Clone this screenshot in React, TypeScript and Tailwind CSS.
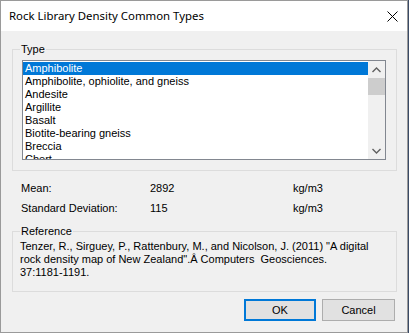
import React from "react"

const rocks = [
  "Amphibolite",
  "Amphibolite, ophiolite, and gneiss",
  "Andesite",
  "Argillite",
  "Basalt",
  "Biotite-bearing gneiss",
  "Breccia",
  "Chert",
]

const font = { fontFamily: '"Liberation Sans", Arial, sans-serif' }

const Chevron = ({ up }: { up?: boolean }) => (
  <svg width="9" height="6" viewBox="0 0 9 6" className="block">
    <path
      d={up ? "M0.5 5 L4.5 1 L8.5 5" : "M0.5 1 L4.5 5 L8.5 1"}
      fill="none"
      stroke="#606060"
      strokeWidth="1.4"
    />
  </svg>
)

const App = () => {
  return (
    <div className="w-[409px] h-[333px] bg-[#3a4a66] flex text-black" style={font}>
      <div className="w-[408px] h-[333px] border border-[#9a9a9a] bg-[#f0f0f0] flex flex-col">
        {/* title bar */}
        <div className="h-[30px] bg-white flex items-center justify-between pl-[8px] pr-[8px] shrink-0">
          <span
            className="text-[11.4px] leading-[16px] text-black"
            style={{ fontFamily: '"Segoe UI", "Noto Sans", sans-serif' }}
          >
            Rock Library Density Common Types
          </span>
          <svg width="11" height="11" viewBox="0 0 11 11" className="mr-[1px]">
            <path d="M0.5 0.5 L10.5 10.5 M10.5 0.5 L0.5 10.5" stroke="#000" strokeWidth="1" />
          </svg>
        </div>

        {/* Type group */}
        <div className="mt-[18px] ml-[11px] w-[385px] h-[122px] border border-[#dcdcdc] flex flex-col">
          <span className="-mt-[7px] ml-[7px] px-px self-start bg-[#f0f0f0] text-[11px] leading-[13px]">
            Type
          </span>
          <div className="mt-[4px] ml-[9px] w-[364px] h-[100px] border border-[#828790] bg-white flex overflow-hidden">
            <div className="flex-1 flex flex-col pt-px overflow-hidden">
              {rocks.map((r, i) => (
                <div
                  key={r}
                  className={
                    i === 0
                      ? "h-[13px] shrink-0 pl-[2px] text-[11px] leading-[13px] bg-[#0078d7] text-white"
                      : "h-[13px] shrink-0 pl-[2px] text-[11px] leading-[13px] text-black"
                  }
                >
                  {r}
                </div>
              ))}
            </div>
            <div className="w-[17px] bg-[#f0f0f0] flex flex-col items-center shrink-0">
              <div className="h-[17px] flex items-center justify-center w-full">
                <Chevron up />
              </div>
              <div className="w-full h-[17px] bg-[#cdcdcd]" />
              <div className="flex-1" />
              <div className="h-[17px] flex items-center justify-center w-full">
                <Chevron />
              </div>
            </div>
          </div>
        </div>

        {/* values */}
        <div className="mt-[11px] ml-[20px] flex flex-col gap-[7px] text-[11px] leading-[13px]">
          <div className="flex">
            <span className="w-[129px]">Mean:</span>
            <span className="w-[143px]">2892</span>
            <span>kg/m3</span>
          </div>
          <div className="flex">
            <span className="w-[129px]">Standard Deviation:</span>
            <span className="w-[143px]">115</span>
            <span>kg/m3</span>
          </div>
        </div>

        {/* Reference group */}
        <div className="mt-[16px] ml-[11px] w-[385px] h-[61px] border border-[#dcdcdc] flex flex-col">
          <span className="-mt-[7px] ml-[7px] px-px self-start bg-[#f0f0f0] text-[11px] leading-[13px]">
            Reference
          </span>
          <div className="mt-[2px] ml-[7px] text-[11px] leading-[13px] flex flex-col">
            <span>Tenzer, R., Sirguey, P., Rattenbury, M., and Nicolson, J. (2011) "A digital</span>
            <span className="whitespace-pre">rock density map of New Zealand".Â Computers  Geosciences.</span>
            <span>37:1181-1191.</span>
          </div>
        </div>

        {/* buttons */}
        <div className="mt-[7px] ml-[243px] flex gap-[6px]">
          <button className="w-[72px] h-[22px] border-2 border-[#0078d7] bg-[#e1e1e1] text-[11px] leading-[13px]">
            OK
          </button>
          <button className="w-[73px] h-[22px] border border-[#adadad] bg-[#e1e1e1] text-[11px] leading-[13px]">
            Cancel
          </button>
        </div>
      </div>
    </div>
  )
}

export default App
